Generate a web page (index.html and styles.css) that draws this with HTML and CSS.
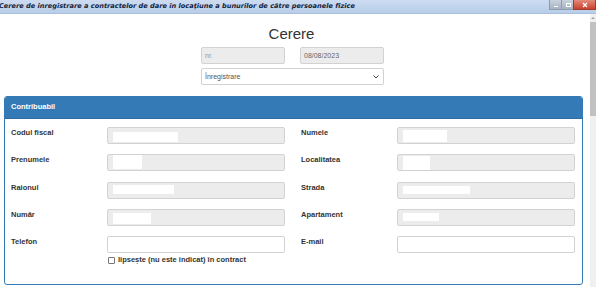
FILE: index.html
```html
<!DOCTYPE html>
<html lang="ro">
<head>
<meta charset="utf-8">
<title>Cerere</title>
<link rel="stylesheet" href="styles.css">
</head>
<body>
<div class="window">
  <div class="titlebar">
    <span class="title">Cerere de inregistrare a contractelor de dare in locaţiune a bunurilor de către persoanele fizice</span>
    <div class="ctrls">
      <span class="ctrl"><svg width="8" height="6" viewBox="0 0 8 6"><rect x="2" y="4" width="4" height="1" fill="#fff"/></svg></span>
      <span class="ctrl"><svg width="8" height="6" viewBox="0 0 8 6"><rect x="2.5" y="1.5" width="4" height="3" fill="none" stroke="#fff"/></svg></span>
      <span class="ctrl close"><svg width="8" height="6" viewBox="0 0 8 6"><path d="M2 1 L6 5 M6 1 L2 5" stroke="#fff" stroke-width="1.3"/></svg></span>
    </div>
  </div>
  <div class="main">
    <div class="container">
      <h1 class="heading">Cerere</h1>
      <div class="meta">
        <div class="input ro muted">nr.</div>
        <div class="input ro">08/08/2023</div>
      </div>
      <div class="select">
        <span>Înregistrare</span>
        <svg width="6" height="4" viewBox="0 0 6 4"><path d="M0.5 0.5 L3 3 L5.5 0.5" fill="none" stroke="#444" stroke-width="1"/></svg>
      </div>
      <div class="panel">
        <div class="panel-h">Contribuabil</div>
        <div class="panel-b">
          <div class="fg"><label>Codul fiscal</label><div class="input ro"><span class="mask" style="width:65px;height:10px;margin-top:4px"></span></div></div>
          <div class="fg"><label>Numele</label><div class="input ro"><span class="mask" style="width:44px;height:12px;margin-top:2px"></span></div></div>
          <div class="fg"><label>Prenumele</label><div class="input ro"><span class="mask" style="width:29px;height:14px;margin-top:0"></span></div></div>
          <div class="fg"><label>Localitatea</label><div class="input ro"><span class="mask" style="width:27px;height:14px;margin-top:1px"></span></div></div>
          <div class="fg"><label>Raionul</label><div class="input ro"><span class="mask" style="width:61px;height:9px;margin-top:2px"></span></div></div>
          <div class="fg"><label>Strada</label><div class="input ro"><span class="mask" style="width:67px;height:8px;margin-top:3px"></span></div></div>
          <div class="fg"><label>Număr</label><div class="input ro"><span class="mask" style="width:38px;height:11px;margin-top:3px"></span></div></div>
          <div class="fg"><label>Apartament</label><div class="input ro"><span class="mask" style="width:36px;height:8px;margin-top:3px"></span></div></div>
          <div class="fg"><label>Telefon</label>
            <div class="stack">
              <div class="input"></div>
              <div class="check"><span class="box"></span><span>lipsește (nu este indicat) în contract</span></div>
            </div>
          </div>
          <div class="fg"><label>E-mail</label><div class="input"></div></div>
        </div>
      </div>
    </div>
    <div class="scrollbar">
      <div class="arrow"><svg width="6" height="4" viewBox="0 0 6 4"><path d="M1 3 L3 1 L5 3Z" fill="#a0a0a0"/></svg></div>
      <div class="thumb"></div>
    </div>
  </div>
</div>
</body>
</html>
```

FILE: styles.css
```css
html, body {
  margin: 0;
  padding: 0;
  background: #fff;
}
body {
  font-family: "Liberation Sans", Arial, sans-serif;
  color: #333;
  width: 596px;
  height: 287px;
  overflow: hidden;
}
.window {
  display: flex;
  flex-direction: column;
  height: 287px;
}
.titlebar {
  height: 13px;
  border-bottom: 1px solid #a9bfdc;
  background: linear-gradient(#cddcf1, #b8cde9);
  display: flex;
  align-items: flex-start;
  justify-content: space-between;
  overflow: hidden;
}
.title {
  font-family: "DejaVu Sans", Verdana, sans-serif;
  font-weight: bold;
  font-style: italic;
  font-size: 6.6px;
  line-height: 13px;
  color: #15233b;
  white-space: nowrap;
  margin-left: -1px;
}
.ctrls {
  display: flex;
  height: 9px;
}
.ctrl {
  width: 11px;
  height: 9px;
  background: linear-gradient(#c9d3df, #a7b3c3);
  border: 1px solid #8e9bad;
  border-top: 0;
  display: flex;
  align-items: center;
  justify-content: center;
  margin-left: -1px;
}
.ctrl.close {
  width: 21px;
  background: linear-gradient(#e48a7a, #c9402d);
  border-color: #a33c2c;
}
.main {
  flex: 1;
  display: flex;
  min-height: 0;
}
.container {
  flex: 1;
  margin: 0 7px 0 4px;
  display: flex;
  flex-direction: column;
  align-items: center;
}
.heading {
  font-size: 15px;
  font-weight: normal;
  line-height: 17px;
  margin: 11px 0 0 -4px;
  color: #333;
}
.meta {
  display: flex;
  gap: 15px;
  margin-top: 5px;
  margin-left: -2px;
}
.input {
  box-sizing: border-box;
  height: 17px;
  border: 1px solid #d2d2d2;
  border-radius: 2px;
  background: #fff;
  font-size: 7px;
  line-height: 15px;
  color: #666;
  padding: 0 3px;
  display: flex;
  align-items: flex-start;
}
.meta .input {
  width: 84px;
}
.input.ro {
  background: #ececec;
}
.input.muted {
  color: #999;
}
.select {
  box-sizing: border-box;
  width: 183px;
  height: 17px;
  margin-top: 4px;
  margin-left: -2px;
  border: 1px solid #d2d2d2;
  border-radius: 2px;
  background: #fff;
  font-size: 7px;
  color: #555;
  padding: 0 4px 0 3px;
  display: flex;
  align-items: center;
  justify-content: space-between;
}
.panel {
  align-self: stretch;
  margin-top: 11px;
  border: 1px solid #337ab7;
  border-radius: 3px;
  overflow: hidden;
}
.panel-h {
  background: #337ab7;
  color: #fff;
  font-weight: bold;
  font-size: 7.5px;
  line-height: 20px;
  padding-left: 6px;
  border-bottom: 1px solid #2e6da4;
  box-sizing: border-box;
  height: 22px;
}
.panel-b {
  display: grid;
  grid-template-columns: 274px 274px;
  column-gap: 16px;
  row-gap: 10.33px;
  padding: 8px 7px 20px 6px;
}
.fg {
  display: grid;
  grid-template-columns: 96px 178px;
  align-items: start;
}
.fg label {
  font-weight: bold;
  font-size: 7.5px;
  line-height: 10px;
  padding-top: 1px;
  color: #333;
}
.mask {
  display: block;
  background: #fff;
  margin-left: 2px;
}
.input .mask {
  flex: none;
}
.stack {
  display: flex;
  flex-direction: column;
}
.check {
  display: flex;
  align-items: center;
  gap: 3px;
  margin-top: 3px;
  margin-left: 1px;
  font-weight: bold;
  font-size: 7.5px;
  line-height: 8px;
  color: #333;
}
.box {
  box-sizing: border-box;
  width: 7px;
  height: 7px;
  border: 1px solid #767676;
  border-radius: 1px;
  background: #fff;
}
.scrollbar {
  width: 6px;
  background: #f0f0f0;
  display: flex;
  flex-direction: column;
  align-items: center;
}
.arrow {
  height: 8px;
  display: flex;
  align-items: center;
  justify-content: center;
}
.thumb {
  width: 6px;
  height: 94px;
  background: #c1c1c1;
}
```
